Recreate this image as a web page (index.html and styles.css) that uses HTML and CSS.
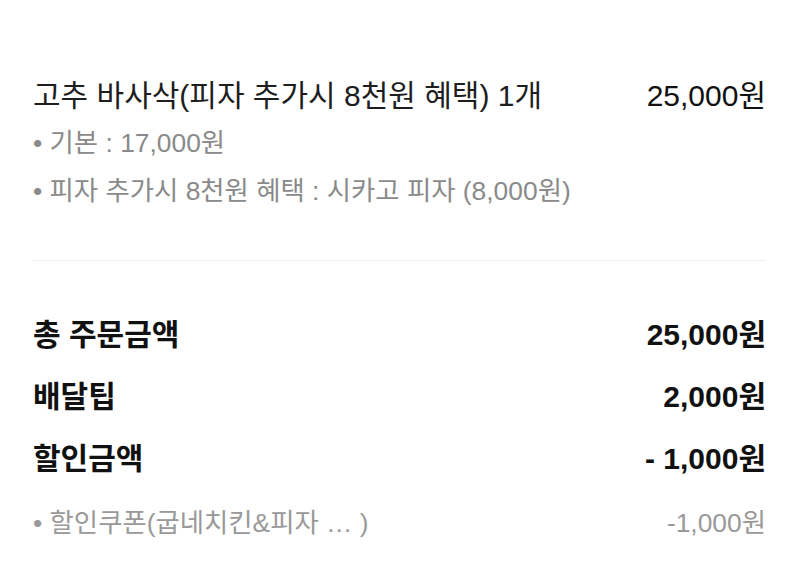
FILE: index.html
```html
<!DOCTYPE html>
<html lang="ko">
<head>
<meta charset="utf-8">
<link rel="stylesheet" href="styles.css">
</head>
<body>
<div class="page">
  <section class="menu">
    <div class="row title-row">
      <span class="menu-name">고추 바사삭(피자 추가시 8천원 혜택) 1개</span>
      <span class="menu-price">25,000원</span>
    </div>
    <div class="opt">• 기본 : 17,000원</div>
    <div class="opt">• 피자 추가시 8천원 혜택 : 시카고 피자 (8,000원)</div>
  </section>
  <hr class="divider">
  <section class="summary">
    <div class="row sum-row">
      <span>총 주문금액</span>
      <span>25,000원</span>
    </div>
    <div class="row sum-row">
      <span>배달팁</span>
      <span>2,000원</span>
    </div>
    <div class="row sum-row">
      <span>할인금액</span>
      <span>- 1,000원</span>
    </div>
    <div class="row coupon-row">
      <span>• 할인쿠폰(굽네치킨&amp;피자 … )</span>
      <span>-1,000원</span>
    </div>
  </section>
</div>
</body>
</html>
```
FILE: styles.css
```css
html, body {
  margin: 0;
  padding: 0;
  background: #fff;
}
body {
  font-family: "Liberation Sans", "Noto Sans CJK KR", sans-serif;
  width: 800px;
  height: 588px;
  overflow: hidden;
}
.page {
  padding: 0 34px 0 33px;
}
.row {
  display: flex;
  justify-content: space-between;
  align-items: center;
}
.menu {
  padding-top: 66px;
}
.title-row {
  height: 53px;
  font-size: 30px;
  color: #1e1e1e;
}
.menu-price {
  color: #111;
}
.opt {
  height: 48px;
  line-height: 48px;
  font-size: 26.4px;
  color: #8a8a8a;
}
.divider {
  border: 0;
  border-top: 1px solid #eeeeee;
  margin: 45px 0 0 -1px;
  height: 0;
}
.summary {
  padding-top: 40px;
}
.sum-row {
  height: 62px;
  font-size: 30px;
  font-weight: bold;
  color: #111;
}
.coupon-row {
  height: 66px;
  font-size: 26.4px;
  color: #999;
}
```
